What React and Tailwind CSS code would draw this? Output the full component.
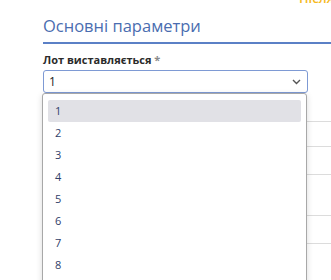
import React from "react";

export default function App() {
  const items = [1, 2, 3, 4, 5, 6, 7, 8, 9];
  return (
    <div className="relative w-[331px] h-[280px] overflow-hidden bg-white" style={{ fontFamily: '"Open Sans", "Noto Sans", sans-serif' }}>
      <div className="flex justify-end h-[6px] overflow-hidden">
        <span className="mt-[-9px] mr-[-3px] text-[13px] leading-[15px] font-semibold text-[#f6b91e] whitespace-nowrap">Після</span>
      </div>
      <div className="pl-[43px] pt-[8px]">
        <div className="text-[16.5px] leading-[24px] text-[#4a6db0] pb-[4px] border-b-2 border-[#5b80c6]">Основні параметри</div>
        <div className="mt-[8px] text-[11px] font-bold leading-[15px] text-[#2b2b2b]">
          Лот виставляється <span className="text-[#8a8a8a]">*</span>
        </div>
        <div className="relative mt-[3px]">
          <div className="w-[265px] h-[23px] rounded-[3px] border border-[#7e9ad4] flex items-center justify-between pl-[5px] pr-[6px] text-[12px] text-[#222]">
            <span>1</span>
            <svg width="9" height="6" viewBox="0 0 9 6"><path d="M1 1l3.5 3.5L8 1" fill="none" stroke="#555" strokeWidth="1.4" /></svg>
          </div>
          {/* table behind the open list */}
          <div className="flex flex-col pt-[28px]">
            <div className="h-[25px] border-t border-[#dcdcdc]" />
            <div className="h-[28px] border-t border-[#dcdcdc]" />
            <div className="h-[41px] border-t border-[#dcdcdc]" />
            <div className="h-[28px] border-t border-[#dcdcdc]" />
            <div className="h-[40px] border-t border-[#dcdcdc]" />
          </div>
          {/* open dropdown list */}
          <div className="absolute left-[-1px] top-[23px] w-[265px] h-[260px] bg-white border border-[#a8a8a8] rounded-[3px] shadow-[0_2px_6px_rgba(0,0,0,0.15)] px-[5px] pt-[6px] flex flex-col">
            {items.map((n, i) => (
              <div key={n} className={`h-[22px] shrink-0 flex items-center pl-[7px] text-[11px] font-medium text-[#2f4069] ${i === 0 ? "bg-[#e1e1e6] rounded-[2px]" : ""}`}>
                {n}
              </div>
            ))}
          </div>
        </div>
      </div>
    </div>
  );
}
